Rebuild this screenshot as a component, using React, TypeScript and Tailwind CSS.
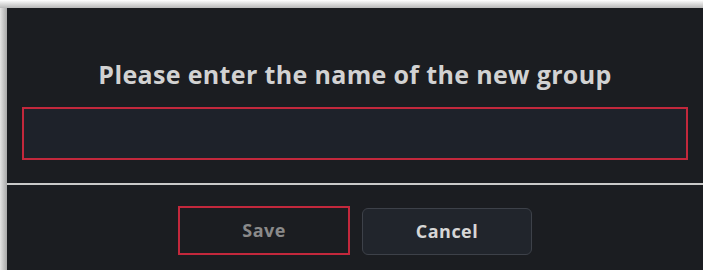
export default function App() {
  return (
    <div className="w-[703px] h-[270px] flex flex-col bg-white font-['Open_Sans',sans-serif] overflow-hidden">
      <div className="h-[8px] bg-gradient-to-b from-white to-[#b8b8b8]" />
      <div className="flex flex-1">
        <div className="w-[7px] bg-gradient-to-r from-[#e4e4e4] to-[#a9a9a9]" />
        <div className="flex-1 flex flex-col bg-[#1b1d21]">
          <h1 className="pt-[50px] text-center text-[25px] leading-[32px] font-bold tracking-[0.35px] text-[#d2d2d2]">
            Please enter the name of the new group
          </h1>
          <div className="mt-[17px] mx-[15px] h-[53px] border-2 border-[#c3283c] bg-[#1e222a]" />
          <div className="mt-[23px] h-[2px] bg-[#c9c9c9]" />
          <div className="mt-[21px] flex justify-center gap-[12px]">
            <button className="w-[172px] h-[49px] border-2 border-[#c3283c] bg-[#1b1d21] text-[18px] font-bold tracking-wide text-[#8a8a8a]">
              Save
            </button>
            <button className="w-[170px] h-[47px] mt-[2px] rounded-md border border-[#3d4149] bg-[#21252c] text-[18px] font-bold tracking-wide text-[#d6d6d6]">
              Cancel
            </button>
          </div>
        </div>
      </div>
    </div>
  );
}
